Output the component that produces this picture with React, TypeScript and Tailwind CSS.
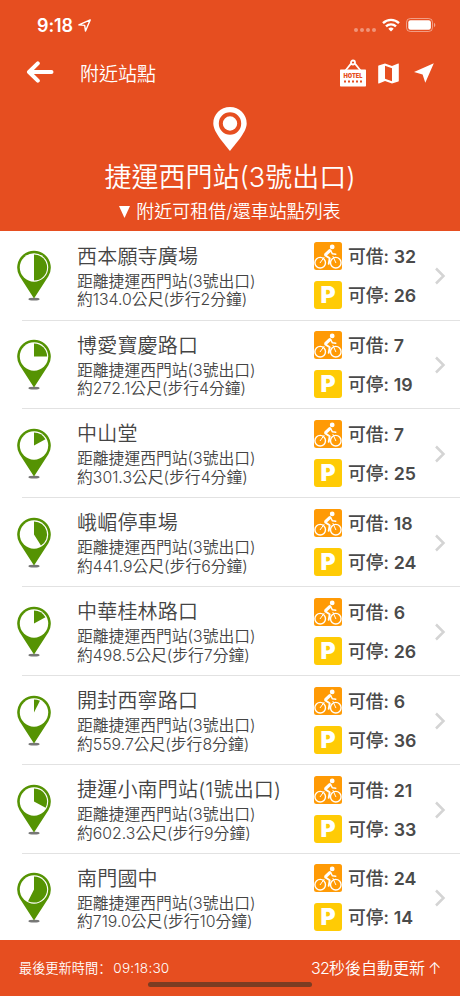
import React from 'react';

interface Station {
  name: string;
  distance: string;
  minutes: number;
  bikes: number;
  docks: number;
  angle: number;
}

const ORIGIN = '捷運西門站(3號出口)';

const stations: Station[] = [
  { name: '西本願寺廣場', distance: '134.0', minutes: 2, bikes: 32, docks: 26, angle: 180 },
  { name: '博愛寶慶路口', distance: '272.1', minutes: 4, bikes: 7, docks: 19, angle: 90 },
  { name: '中山堂', distance: '301.3', minutes: 4, bikes: 7, docks: 25, angle: 61 },
  { name: '峨嵋停車場', distance: '441.9', minutes: 6, bikes: 18, docks: 24, angle: 148 },
  { name: '中華桂林路口', distance: '498.5', minutes: 7, bikes: 6, docks: 26, angle: 61 },
  { name: '開封西寧路口', distance: '559.7', minutes: 8, bikes: 6, docks: 36, angle: 27 },
  { name: '捷運小南門站(1號出口)', distance: '602.3', minutes: 9, bikes: 21, docks: 33, angle: 118 },
  { name: '南門國中', distance: '719.0', minutes: 10, bikes: 24, docks: 14, angle: 207 },
];

const StationPin: React.FC<{ angle: number }> = ({ angle }) => {
  const rad = (angle * Math.PI) / 180;
  const r = 13.1;
  const x = 18 + r * Math.sin(rad);
  const y = 17.5 - r * Math.cos(rad);
  return (
    <svg width="36" height="52" viewBox="0 0 36 52" className="shrink-0">
      <ellipse cx="18" cy="49.2" rx="5.6" ry="1.4" fill="#777" />
      <path d="M18 48.5L3.6 26.3a16.8 16.8 0 1 1 28.8 0z" fill="#559303" />
      <circle cx="18" cy="17.5" r="14.2" fill="#fff" />
      <path d={`M18 17.5V4.4A${r} ${r} 0 ${angle > 180 ? 1 : 0} 1 ${x} ${y}z`} fill="#559303" />
    </svg>
  );
};

const BikeIcon: React.FC = () => (
  <svg width="28" height="28" viewBox="0 0 28 28" className="shrink-0">
    <rect width="28" height="28" rx="2.5" fill="#ff9a05" />
    <g fill="none" stroke="#fff" strokeLinecap="round" strokeLinejoin="round">
      <circle cx="6.2" cy="20.7" r="5.3" strokeWidth="1.4" />
      <circle cx="21.8" cy="20.7" r="5.3" strokeWidth="1.4" />
      <path d="M15.8 8.6L11.8 12.4" strokeWidth="3.2" />
      <path d="M11.3 13.4l4.4 2.8-1 5.6" strokeWidth="1.9" />
      <path d="M16.8 8.8l1.6 3 3.4.4" strokeWidth="1.4" />
      <path d="M6.2 20.7l3.9-5.4M21.8 20.7l-2.8-6.2" strokeWidth="1" />
    </g>
    <circle cx="18.2" cy="4.9" r="2.4" fill="#fff" />
  </svg>
);

const ParkingIcon: React.FC = () => (
  <div className="flex size-[28px] shrink-0 items-center justify-center rounded-[3px] bg-[#ffcb05] font-['Inter',sans-serif] text-[23px] font-black text-white">
    P
  </div>
);

const StatusBar: React.FC = () => (
  <div className="flex h-[50px] items-center pr-[24px] pl-[37px]">
    <span className="font-['Inter',sans-serif] text-[18px] font-semibold tracking-[-0.1px]">9:18</span>
    <svg width="13" height="13" viewBox="0 0 13 13" className="ml-[5px]">
      <path d="M.9 5.9L12.2.9 7.5 12.1 6.7 6.4z" fill="none" stroke="#fff" strokeWidth="1.4" strokeLinejoin="round" />
    </svg>
    <div className="mt-[10px] ml-auto flex gap-[2px]">
      {[0, 1, 2, 3].map((dot) => (
        <span key={dot} className="size-[4px] rounded-full bg-white/40" />
      ))}
    </div>
    <svg width="18" height="14" viewBox="0 0 18 14" className="ml-[6px]">
      <g fill="none" stroke="#fff" strokeWidth="2.4">
        <path d="M1 5.1a11.5 11.5 0 0 1 16 0" />
        <path d="M4 8.4a7.2 7.2 0 0 1 10 0" />
      </g>
      <path d="M9 13.5L6.3 10.7a3.9 3.9 0 0 1 5.4 0z" fill="#fff" />
    </svg>
    <svg width="30" height="14" viewBox="0 0 30 14" className="ml-[6px]">
      <rect x=".5" y=".5" width="26" height="13" rx="3.8" fill="none" stroke="#fff" strokeOpacity=".45" />
      <rect x="2.3" y="2.3" width="22.6" height="9.4" rx="2.2" fill="#fff" />
      <path d="M28 4.8c1.8.7 1.8 3.7 0 4.4z" fill="#fff" fillOpacity=".5" />
    </svg>
  </div>
);

const Toolbar: React.FC = () => (
  <div className="flex h-[46px] items-center pr-[26px] pl-[26px]">
    <svg width="28" height="22" viewBox="0 0 28 22" className="-mt-[2px]" fill="none" stroke="#fff" strokeWidth="4" strokeLinecap="round" strokeLinejoin="round">
      <path d="M25.5 11H3.5M11.8 2.3L3 11l8.8 8.7" />
    </svg>
    <h1 className="mt-[2px] ml-[26px] text-[19px] leading-none font-[350]">附近站點</h1>
    <div className="ml-auto flex items-center">
      <svg width="26" height="28" viewBox="0 0 26 28" className="mr-[12px]">
        <path d="M5.5 11.5L11 4.6M20.5 11.5L15 4.6" stroke="#fff" strokeWidth="1.7" />
        <circle cx="13" cy="3.5" r="2" fill="none" stroke="#fff" strokeWidth="1.8" />
        <rect x="0" y="10.5" width="26" height="17" rx=".7" fill="#fff" />
        <text x="13" y="19.3" textAnchor="middle" textLength="19" lengthAdjust="spacingAndGlyphs" fill="#e64e20" className="font-['Inter',sans-serif] text-[6.5px] font-black">
          HOTEL
        </text>
        <path d="M4 22.5h18" stroke="#e64e20" strokeWidth="2" strokeDasharray="2 2" />
      </svg>
      <svg width="21" height="21" viewBox="0 0 21 21" className="mr-[15px]">
        <path d="M20.5.4l-.3.1L14 2.9 7 .5.6 2.6c-.3.1-.4.3-.4.6v16.7c0 .4.4.6.7.5L7 18.1l7 2.4 6.4-2.1c.3-.1.4-.3.4-.6V1c0-.4-.1-.6-.3-.6zM14 18.2l-7-2.5V2.8l7 2.4z" fill="#fff" fillRule="evenodd" />
      </svg>
      <svg width="20" height="20" viewBox="0 0 20 20">
        <path d="M19.8.2L0 9.1l8.6 2.3 2.7 8.4z" fill="#fff" />
      </svg>
    </div>
  </div>
);

const StationRow: React.FC<{ station: Station; last: boolean }> = ({ station, last }) => (
  <li className="flex h-[88.9px] pl-4">
    <div className="pt-[19px]">
      <StationPin angle={station.angle} />
    </div>
    <div className="w-[236px] shrink-0 pt-[12.5px] pl-[25px] font-[350] whitespace-nowrap text-[#444]">
      <h3 className="text-[20px] leading-[26px] tracking-[0.2px]">{station.name}</h3>
      <p className="mt-[3px] text-[15.8px] leading-[18.5px]">距離{ORIGIN}</p>
      <p className="text-[15.8px] leading-[18.5px]">
        約{station.distance}公尺(步行{station.minutes}分鐘)
      </p>
    </div>
    <div className="flex w-[118px] shrink-0 flex-col gap-[11px] pt-[11px] pl-[26px] text-[17.8px] leading-[30px] font-medium whitespace-nowrap text-[#4a4a4a]">
      <div className="flex h-[28px] gap-[6px]">
        <BikeIcon />
        <span>可借: <b className="font-semibold">{station.bikes}</b></span>
      </div>
      <div className="flex h-[28px] gap-[6px]">
        <ParkingIcon />
        <span>可停: <b className="font-semibold">{station.docks}</b></span>
      </div>
    </div>
    <svg width="12" height="18" viewBox="0 0 12 18" className="mt-[36px] ml-[28px]" fill="none" stroke="#d4d4d4" strokeWidth="2.5">
      <path d="M2 1.5L9.5 9 2 16.5" />
    </svg>
    {!last && <div className="pointer-events-none mt-[88.4px] -ml-[424px] h-px w-[438px] shrink-0 bg-[#e2e2e2]" />}
  </li>
);

const App: React.FC = () => {
  return (
    <div className="flex h-[996px] w-[460px] flex-col overflow-hidden bg-white font-['Inter','Noto_Sans_CJK_TC',sans-serif]">
      <header className="h-[231.2px] shrink-0 bg-[#e64e20] text-white">
        <StatusBar />
        <Toolbar />
        <div className="flex flex-col items-center pt-[11px] font-[350]">
          <svg width="34" height="44" viewBox="0 0 34 44">
            <path d="M17 0C7.6 0 .3 7.2.3 16.4.3 25.5 13 38.5 17 44c4-5.5 16.7-18.5 16.7-27.6C33.7 7.2 26.4 0 17 0z" fill="#fff" />
            <circle cx="17" cy="16.5" r="9.2" fill="#fff" stroke="#e64e20" strokeWidth="4" />
          </svg>
          <h2 className="mt-[10px] text-[27px] leading-[34px] whitespace-nowrap">{ORIGIN}</h2>
          <p className="mt-[5px] flex items-center text-[18px] leading-[24px] whitespace-nowrap">
            <svg width="11" height="12" viewBox="0 0 11 12" className="mr-[6px]">
              <path d="M0 0h11L5.5 12z" fill="#fff" />
            </svg>
            附近可租借/還車站點列表
          </p>
        </div>
      </header>

      <ul className="h-[708.8px] shrink-0 overflow-hidden">
        {stations.map((station, index) => (
          <StationRow key={station.name} station={station} last={index === stations.length - 1} />
        ))}
      </ul>

      <footer className="relative flex h-[56px] shrink-0 items-center justify-between bg-[#e64e20] pr-[21px] pl-[19px] font-[350] text-white">
        <span className="text-[13.2px]">
          最後更新時間<span className="font-['Noto_Sans_CJK_SC',sans-serif]" lang="zh-CN">：</span>
          <span className="ml-[2px] text-[13.6px] tracking-[0.2px]">09:18:30</span>
        </span>
        <span className="text-[16px]">
          <span className="tracking-[-0.8px]">32</span>秒後自動更新<span className="ml-[3px] inline-block w-[11px] text-center">↑</span>
        </span>
        <div className="absolute bottom-[9px] left-[148px] h-[5px] w-[164px] rounded-full bg-[#7c3c22]" />
      </footer>
    </div>
  );
};

export default App;
